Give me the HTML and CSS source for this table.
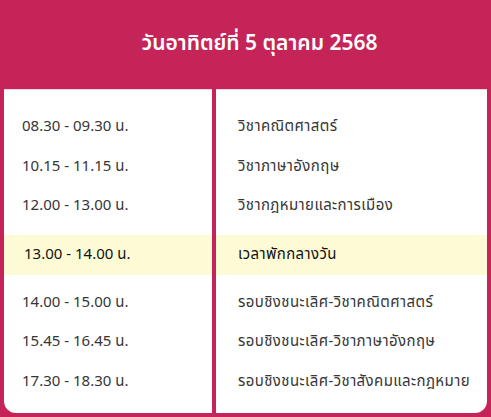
FILE: index.html
```html
<!DOCTYPE html>
<html lang="th">
<head>
<meta charset="utf-8">
<link rel="stylesheet" href="styles.css">
</head>
<body>
<div class="card">
  <div class="head">วันอาทิตย์ที่ 5 ตุลาคม 2568</div>
  <div class="table">
    <div class="col col-time">
      <div class="row">08.30 - 09.30 น.</div>
      <div class="row">10.15 - 11.15 น.</div>
      <div class="row">12.00 - 13.00 น.</div>
      <div class="row hl">13.00 - 14.00 น.</div>
      <div class="row">14.00 - 15.00 น.</div>
      <div class="row">15.45 - 16.45 น.</div>
      <div class="row">17.30 - 18.30 น.</div>
    </div>
    <div class="col col-subj">
      <div class="row">วิชาคณิตศาสตร์</div>
      <div class="row">วิชาภาษาอังกฤษ</div>
      <div class="row">วิชากฎหมายและการเมือง</div>
      <div class="row hl">เวลาพักกลางวัน</div>
      <div class="row">รอบชิงชนะเลิศ-วิชาคณิตศาสตร์</div>
      <div class="row">รอบชิงชนะเลิศ-วิชาภาษาอังกฤษ</div>
      <div class="row">รอบชิงชนะเลิศ-วิชาสังคมและกฎหมาย</div>
    </div>
  </div>
</div>
</body>
</html>
```
FILE: styles.css
```css
html, body {
  margin: 0;
  padding: 0;
  background: #c52458;
}
body {
  font-family: "Noto Sans Thai", "Noto Sans Thai UI", "Noto Sans", "Liberation Sans", sans-serif;
  width: 491px;
  height: 417px;
}
.card {
  padding: 0 4px 4px 4px;
}
.head {
  height: 89px;
  display: flex;
  align-items: center;
  justify-content: center;
  color: #fff;
  font-size: 21px;
  font-weight: 600;
  padding-left: 28px;
  box-sizing: border-box;
  padding-bottom: 2px;
}
.table {
  display: flex;
  gap: 4px;
  height: 324px;
}
.col {
  background: #fff;
  padding: 17px 0 12px;
  box-sizing: border-box;
  display: flex;
  flex-direction: column;
  border-top: 1px solid #f6d3de;
}
.col-time {
  width: 208px;
  border-bottom-left-radius: 12px;
}
.col-subj {
  flex: 1;
  border-bottom-right-radius: 12px;
}
.row {
  height: 39.5px;
  display: flex;
  align-items: center;
  font-size: 15px;
  color: #363636;
  white-space: nowrap;
}
.col-time .row {
  padding-left: 18px;
}
.col-subj .row {
  padding-left: 22px;
  letter-spacing: 0.4px;
}
.row.hl {
  background: #fdfbd6;
  color: #111;
  height: 40px;
  margin: 9px 0 8px;
}
.col-time .row.hl {
  padding-left: 20px;
}
```
